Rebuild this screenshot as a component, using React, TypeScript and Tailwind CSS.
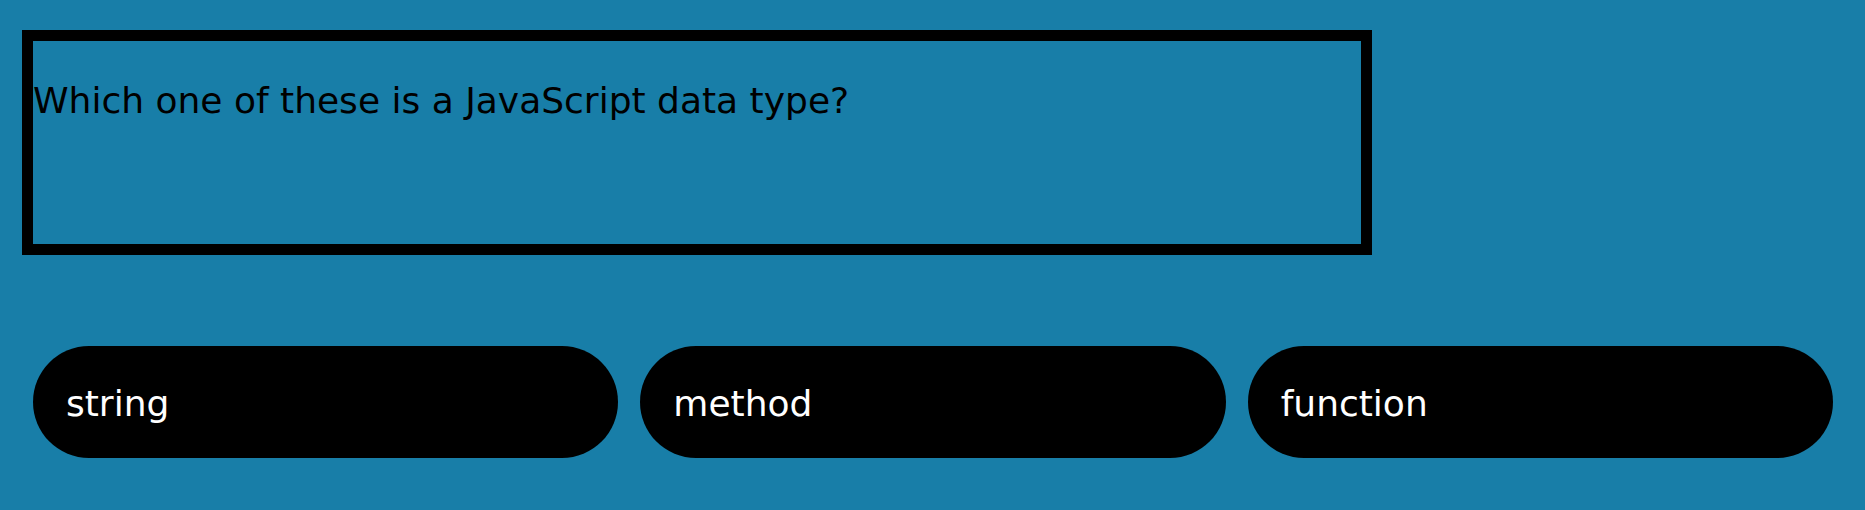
const question = "Which one of these is a JavaScript data type?";
const answers = ["string", "method", "function"];

export default function App() {
  return (
    <main className="min-h-screen bg-[#187ea8] px-[22px] py-[30px] font-[Verdana,'DejaVu_Sans',sans-serif] text-[36px] leading-[42px] text-black">
      <section className="min-h-[225px] w-full max-w-[1350px] border-[11px] border-black pt-[39px]">
        <h1>{question}</h1>
      </section>
      <div className="mt-[91px] grid grid-cols-3 gap-[22px] pr-[10px] pl-[11px]">
        {answers.map((answer) => (
          <button
            key={answer}
            type="button"
            className="rounded-full bg-black px-[33px] pt-[37px] pb-[33px] text-left text-white"
          >
            {answer}
          </button>
        ))}
      </div>
    </main>
  );
}
